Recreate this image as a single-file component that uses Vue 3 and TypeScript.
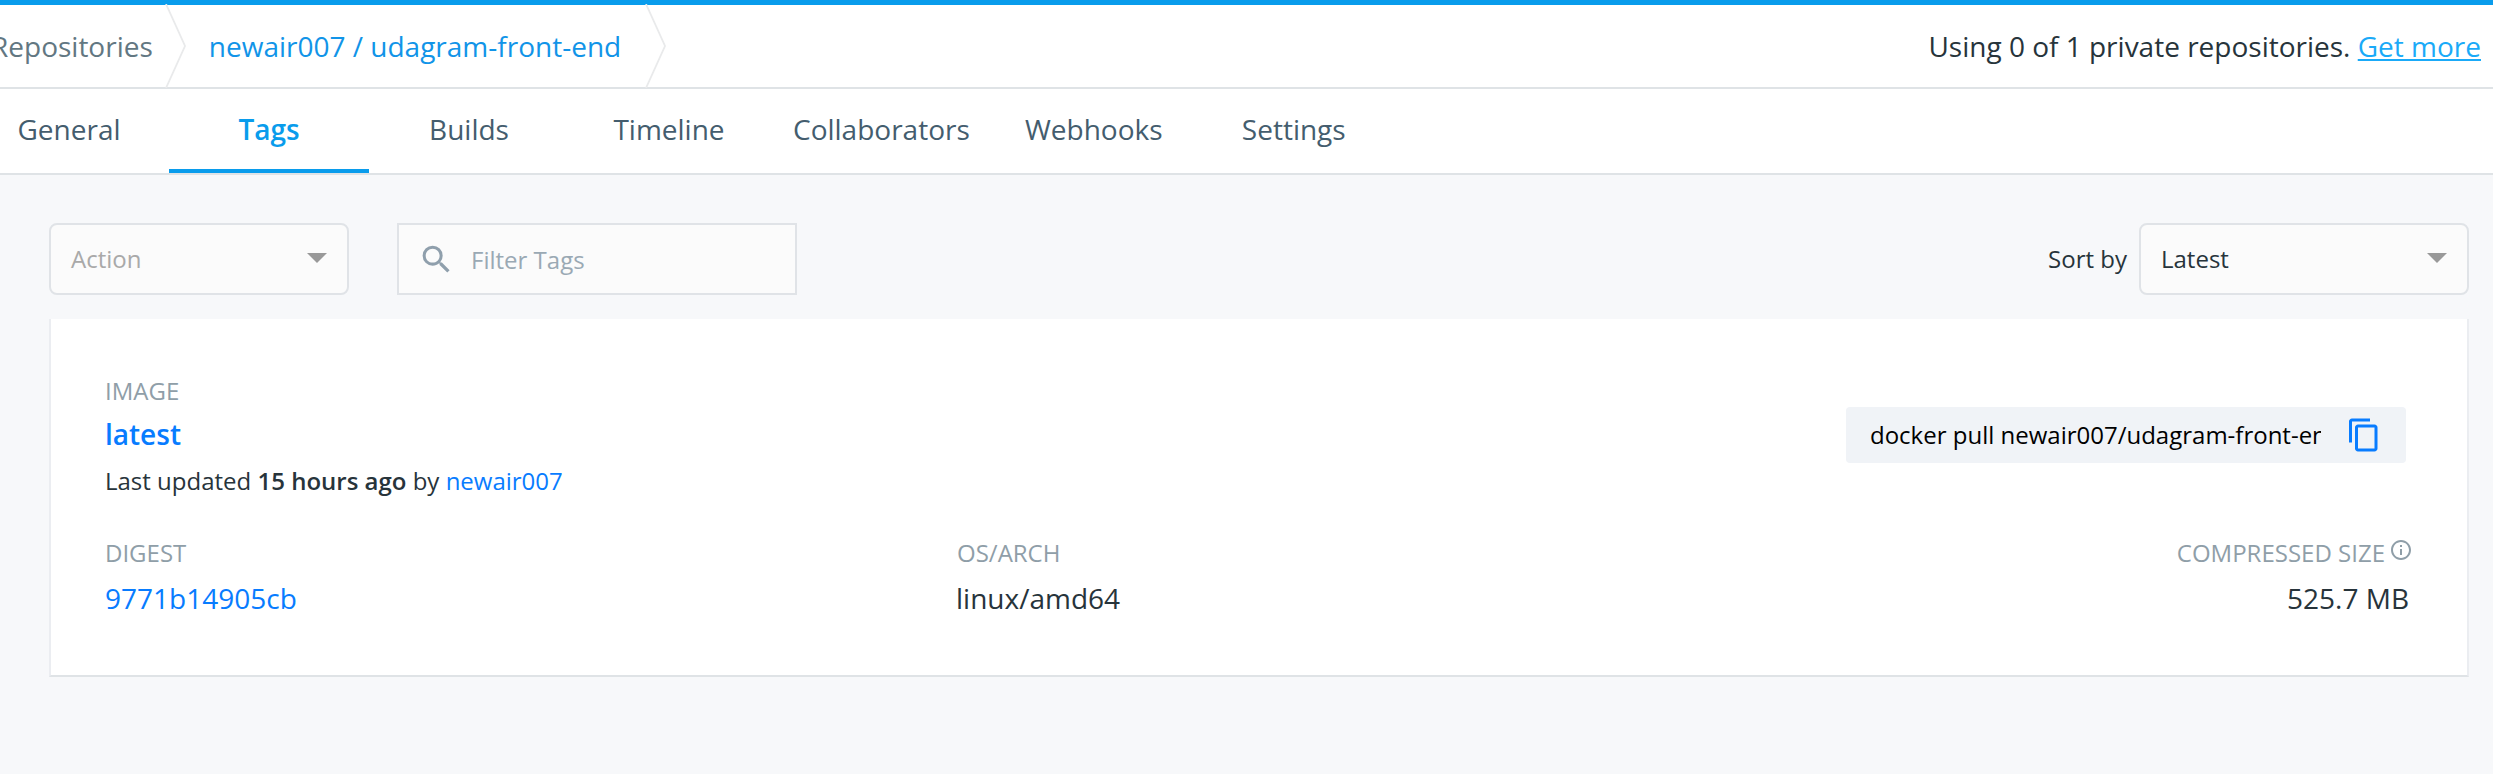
<script setup lang="ts">
interface Tab {
  label: string
  active?: boolean
}

const tabs: Tab[] = [
  { label: 'General' },
  { label: 'Tags', active: true },
  { label: 'Builds' },
  { label: 'Timeline' },
  { label: 'Collaborators' },
  { label: 'Webhooks' },
  { label: 'Settings' },
]
const pullCommand = 'docker pull newair007/udagram-front-end:latest'
</script>

<template>
  <div class="page">
    <header class="topbar">
      <nav class="crumbs">
        <a class="crumb muted">Repositories</a>
        <svg class="chevron" viewBox="0 0 22 84"><path d="M1 0 20 42 1 84" /></svg>
        <a class="crumb current">newair007 / udagram-front-end</a>
        <svg class="chevron" viewBox="0 0 22 84"><path d="M1 0 20 42 1 84" /></svg>
      </nav>
      <p class="quota">Using 0 of 1 private repositories. <a class="more">Get more</a></p>
    </header>

    <nav class="tabs">
      <a v-for="tab in tabs" :key="tab.label" class="tab" :class="{ active: tab.active }">{{ tab.label }}</a>
    </nav>

    <main class="content">
      <div class="toolbar">
        <div class="select action">
          <span>Action</span>
          <i class="caret"></i>
        </div>
        <div class="filter">
          <svg class="search" viewBox="0 0 24 24">
            <path d="M15.5 14h-.79l-.28-.27A6.47 6.47 0 0 0 16 9.5 6.5 6.5 0 1 0 9.5 16c1.61 0 3.09-.59 4.23-1.57l.27.28v.79l5 4.99L20.49 19l-4.99-5zm-6 0C7.01 14 5 11.99 5 9.5S7.01 5 9.5 5 14 7.01 14 9.5 11.99 14 9.5 14z" />
          </svg>
          <span>Filter Tags</span>
        </div>
        <span class="sort-label">Sort by</span>
        <div class="select sort">
          <span>Latest</span>
          <i class="caret"></i>
        </div>
      </div>

      <section class="card">
        <div class="summary">
          <div>
            <div class="label">IMAGE</div>
            <a class="tag-name">latest</a>
            <div class="updated">Last updated <b>15 hours ago</b> by <a>newair007</a></div>
          </div>
          <div class="pull">
            <span class="command">{{ pullCommand }}</span>
            <svg class="copy" viewBox="0 0 24 24">
              <path d="M16 1H4c-1.1 0-2 .9-2 2v14h2V3h12V1zm3 4H8c-1.1 0-2 .9-2 2v14c0 1.1.9 2 2 2h11c1.1 0 2-.9 2-2V7c0-1.1-.9-2-2-2zm0 16H8V7h11v14z" />
            </svg>
          </div>
        </div>
        <div class="details">
          <div>
            <div class="label">DIGEST</div>
            <a class="value link">9771b14905cb</a>
          </div>
          <div>
            <div class="label arch-label">OS/ARCH</div>
            <div class="value">linux/amd64</div>
          </div>
          <div class="size">
            <div class="label size-label">
              <span>COMPRESSED SIZE</span>
              <svg class="info" viewBox="0 0 24 24">
                <path d="M11 17h2v-6h-2v6zm1-15C6.48 2 2 6.48 2 12s4.48 10 10 10 10-4.48 10-10S17.52 2 12 2zm0 18c-4.41 0-8-3.59-8-8s3.59-8 8-8 8 3.59 8 8-3.59 8-8 8zM11 9h2V7h-2v2z" />
              </svg>
            </div>
            <div class="value">525.7 MB</div>
          </div>
        </div>
      </section>
    </main>
  </div>
</template>

<style>
body {
  margin: 0;
  background: #f7f8fa;
  overflow: hidden;
}
</style>

<style scoped>
.page {
  box-sizing: border-box;
  height: 774px;
  overflow: hidden;
  background: #f7f8fa;
  color: #27343b;
  font-family: 'Open Sans', sans-serif;
  font-size: 28px;
  white-space: nowrap;
}
.topbar {
  display: flex;
  justify-content: space-between;
  box-sizing: border-box;
  height: 89px;
  padding-right: 12px;
  border-top: 5px solid #099cec;
  border-bottom: 2px solid #dfe3e6;
  background: #fff;
  line-height: 82px;
}
.crumbs {
  display: flex;
  margin-left: -9px;
}
.muted {
  color: #627782;
}
.current {
  margin-left: 22px;
  margin-right: 12px;
  color: #1194e8;
}
.chevron {
  width: 22px;
  height: 84px;
  margin-top: -1px;
  margin-left: 12px;
  fill: none;
  stroke: #e9eaeb;
  stroke-width: 1.8;
}
.quota {
  margin: 0;
}
.more {
  color: #1aaaf8;
  text-decoration: underline;
}
.tabs {
  display: flex;
  box-sizing: border-box;
  height: 86px;
  border-bottom: 2px solid #dfe3e6;
  background: #fff;
}
.tab {
  box-sizing: border-box;
  min-width: 200px;
  height: 84px;
  padding: 0 24px;
  border-bottom: 4px solid transparent;
  color: #445d6e;
  line-height: 80px;
  text-align: center;
}
.tab:first-child {
  margin-left: -31px;
}
.tab.active {
  border-color: #099cec;
  color: #099cec;
  font-weight: 600;
}
.content {
  padding: 48px 24px 0 49px;
}
.toolbar {
  display: flex;
  align-items: center;
  height: 72px;
  font-size: 24px;
}
.select,
.filter {
  display: flex;
  align-items: center;
  box-sizing: border-box;
  height: 72px;
  border: 2px solid #e0e3e7;
  background: #fbfbfb;
}
.select {
  justify-content: space-between;
  padding: 0 20px;
  border-radius: 8px;
}
.select span {
  padding-bottom: 2px;
}
.action {
  width: 300px;
  color: #a9a9a9;
}
.caret {
  margin-top: -2px;
  border: 10px solid transparent;
  border-top-color: #999;
  border-bottom: 0;
}
.filter {
  width: 400px;
  margin-left: 48px;
  padding-left: 19px;
  color: #9aa9b4;
}
.filter span {
  padding-left: 16px;
}
.search {
  width: 37px;
  height: 37px;
  fill: #8f9fac;
}
.sort-label {
  margin-left: auto;
  margin-right: 12px;
  padding-bottom: 1px;
}
.sort {
  width: 330px;
}
.card {
  box-sizing: border-box;
  height: 358px;
  margin-top: 24px;
  padding: 56px 56px 0 54px;
  border: 2px solid #ebedf1;
  border-top: 0;
  border-bottom-color: #dfe3e6;
  background: #fff;
}
.summary {
  display: flex;
  justify-content: space-between;
}
.label {
  color: #8f9ea8;
  font-size: 24px;
  line-height: 32px;
}
.tag-name {
  display: block;
  color: #087cff;
  font-weight: 600;
  line-height: 54px;
}
.updated {
  font-size: 24px;
  line-height: 40px;
}
.updated b {
  font-weight: 600;
}
.updated a,
.link {
  color: #087cff;
}
.pull {
  display: flex;
  align-items: center;
  box-sizing: border-box;
  width: 560px;
  height: 56px;
  margin: 32px 5px 0 0;
  padding-left: 24px;
  border-radius: 4px;
  background: #f0f3f7;
  color: #000;
  font-size: 24px;
}
.command {
  width: 451px;
  padding-bottom: 2px;
  overflow: hidden;
}
.copy {
  width: 36px;
  height: 36px;
  margin-left: 25px;
  fill: #087cff;
}
.details {
  display: grid;
  grid-template-columns: 851px 1fr auto;
  margin-top: 36px;
}
.arch-label {
  padding-left: 1px;
}
.value {
  display: block;
  line-height: 58px;
}
.size {
  text-align: right;
}
.size .value {
  padding-right: 2px;
}
.size-label {
  display: flex;
  gap: 4px;
}
.info {
  width: 24px;
  height: 24px;
  margin: 1px -2px 0 0;
  fill: #8f9ea8;
}
</style>
